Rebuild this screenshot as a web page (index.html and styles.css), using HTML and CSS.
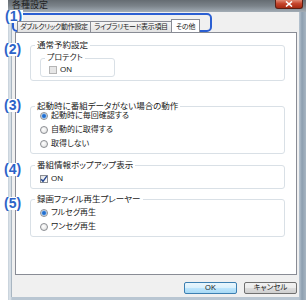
FILE: index.html
```html
<!DOCTYPE html>
<html lang="ja">
<head>
    <meta charset="UTF-8">
    <title>各種設定</title>
    <link rel="stylesheet" href="styles.css">
</head>
<body>
    <div class="window">
        <div class="titlebar">
            <span class="title">各種設定</span>
            <span class="close">
                <svg width="8" height="6" viewBox="0 0 8 6"><path d="M1 0.5 L7 5.5 M7 0.5 L1 5.5" stroke="#fff" stroke-width="1.6"/></svg>
            </span>
        </div>
        <div class="frame">
            <div class="client">
                <div class="tabs">
                    <div class="tab tab-wide">ダブルクリック動作設定</div>
                    <div class="tab tab-lib">ライブラリモード表示項目</div>
                    <div class="tab active">その他</div>
                </div>

                <div class="page">
                    <fieldset class="group g1">
                        <legend>通常予約設定</legend>
                        <fieldset class="group inner">
                            <legend>プロテクト</legend>
                            <div class="row"><span class="check disabled"></span>ON</div>
                        </fieldset>
                    </fieldset>

                    <fieldset class="group g2">
                        <legend>起動時に番組データがない場合の動作</legend>
                        <div class="row"><span class="radio on"></span>起動時に毎回確認する</div>
                        <div class="row"><span class="radio"></span>自動的に取得する</div>
                        <div class="row"><span class="radio"></span>取得しない</div>
                    </fieldset>

                    <fieldset class="group g3">
                        <legend>番組情報ポップアップ表示</legend>
                        <div class="row">
                            <span class="check">
                                <svg width="8" height="8" viewBox="0 0 8 8"><path d="M1.2 4.2 L3 6.3 L6.8 1.2" fill="none" stroke="#24468f" stroke-width="1.4"/></svg>
                            </span>ON
                        </div>
                    </fieldset>

                    <fieldset class="group g4">
                        <legend>録画ファイル再生プレーヤー</legend>
                        <div class="row"><span class="radio on"></span>フルセグ再生</div>
                        <div class="row"><span class="radio"></span>ワンセグ再生</div>
                    </fieldset>
                </div>

                <div class="buttons">
                    <button class="btn default">OK</button>
                    <button class="btn">キャンセル</button>
                </div>
            </div>
        </div>
    </div>

    <!-- 注記（青い番号と枠） -->
    <div class="tab-mark"></div>
    <span class="mark m1">(1)</span>
    <span class="mark m2">(2)</span>
    <span class="mark m3">(3)</span>
    <span class="mark m4">(4)</span>
    <span class="mark m5">(5)</span>
</body>
</html>
```

FILE: styles.css
```css
body {
    margin: 0;
    background-color: #ffffff;
    font-family: "Liberation Sans", "Noto Sans CJK JP", sans-serif;
    font-feature-settings: "palt";
    color: #1a1a1a;
    position: relative;
    width: 306px;
    height: 300px;
    overflow: hidden;
}

.window {
    margin-left: 8px;
    width: 298px;
    height: 300px;
    display: flex;
    flex-direction: column;
    background: linear-gradient(90deg, #c3ced8 0, #dfe6ec 2px, #b9c6d2 4px, #b9c6d2 291px, #8d9fb0 294px, #a7b5c2 298px);
}

.titlebar {
    height: 12px;
    display: flex;
    justify-content: space-between;
    align-items: flex-start;
    background: linear-gradient(180deg, #656c72 0, #7b838a 6px, #a3adb6 12px);
}

.title {
    font-size: 9px;
    line-height: 9px;
    margin: 1px 0 0 4px;
    color: #1e1e1e;
}

.close {
    width: 28px;
    height: 9px;
    margin-right: 3px;
    display: flex;
    align-items: center;
    justify-content: center;
    border: 1px solid #5b1f14;
    border-top: none;
    border-radius: 0 0 3px 3px;
    box-sizing: border-box;
    background: linear-gradient(180deg, #e08a74 0, #c5452c 45%, #a62a12 100%);
}

.frame {
    flex: 1;
    padding: 0 7px 3px 4px;
    display: flex;
}

.client {
    flex: 1;
    background-color: #f0f0f0;
    padding: 9px 2px 0 3px;
    display: flex;
    flex-direction: column;
    border-left: 1px solid #a9b6c2;
    margin-left: -1px;
}

.tabs {
    display: flex;
    height: 11px;
    padding-left: 2px;
    position: relative;
    z-index: 1;
}

.tab {
    height: 11px;
    box-sizing: border-box;
    border: 1px solid #898c95;
    border-bottom: none;
    background: linear-gradient(180deg, #f6f6f6, #e2e2e2);
    font-size: 7px;
    letter-spacing: -0.3px;
    line-height: 10px;
    text-align: center;
    margin-right: -1px;
    white-space: nowrap;
    overflow: hidden;
}

.tab-wide {
    width: 74px;
}

.tab-lib {
    width: 82px;
}

.tab.active {
    width: 29px;
    height: 13px;
    margin-top: -2px;
    background: #ffffff;
    line-height: 13px;
}

.page {
    height: 243px;
    box-sizing: border-box;
    border: 1px solid #898c95;
    background-color: #ffffff;
    padding: 0 11px 0 14px;
}

.group {
    margin: 0;
    padding: 0 0 3px 0;
    border: 1px solid #d9e0e6;
    border-radius: 3px;
    min-width: 0;
}

.group legend {
    margin-left: 4px;
    padding: 0 2px;
    font-size: 8.5px;
    line-height: 10px;
}

.row {
    display: flex;
    align-items: center;
    gap: 3px;
    font-size: 8px;
    line-height: 10px;
    padding-left: 9px;
    margin-top: 4px;
}

.g1 {
    margin-top: 7px;
    padding-bottom: 3px;
}

.inner {
    width: 75px;
    box-sizing: border-box;
    margin: 3px 0 0 9px;
    padding-bottom: 1px;
}

.inner legend {
    font-size: 8px;
}

.inner .row {
    margin-top: 2px;
    padding-left: 8px;
}

.g2 {
    margin-top: 20px;
    padding-bottom: 4px;
}

.g2 .row:first-of-type {
    margin-top: 0;
}

.g3 {
    margin-top: 6px;
    padding-bottom: 4px;
}

.g4 {
    margin-top: 5px;
    padding-bottom: 4px;
}

.radio {
    width: 8px;
    height: 8px;
    box-sizing: border-box;
    border-radius: 50%;
    border: 1px solid #8b8e93;
    background: radial-gradient(circle at 40% 40%, #ffffff 0, #e9e9e9 60%, #cfcfcf 100%);
}

.radio.on {
    background: radial-gradient(circle, #1c5fbf 0, #2d7bd8 1.5px, #a9c9ef 2.5px, #ececec 3px);
}

.check {
    width: 8px;
    height: 8px;
    box-sizing: border-box;
    border: 1px solid #8b8e93;
    background: linear-gradient(135deg, #e3e3e3, #ffffff);
    display: flex;
    align-items: center;
    justify-content: center;
}

.check svg {
    margin: -1px;
}

.check.disabled {
    border-color: #b5b5b5;
    background: #e6e6e6;
}

.buttons {
    display: flex;
    justify-content: flex-end;
    gap: 7px;
    padding-top: 7px;
}

.btn {
    width: 53px;
    height: 12px;
    padding: 0;
    border: 1px solid #707070;
    border-radius: 2px;
    background: linear-gradient(180deg, #f2f2f2 0, #ebebeb 50%, #dddddd 51%, #cfcfcf 100%);
    font-family: "Liberation Sans", "Noto Sans CJK JP", sans-serif;
    font-feature-settings: "palt";
    font-size: 7.5px;
    line-height: 10px;
    color: #1a1a1a;
}

.btn.default {
    border-color: #3c7fb1;
    background: linear-gradient(180deg, #eaf6fd 0, #d9f0fc 50%, #bee6fd 51%, #a7d9f5 100%);
}

/* 注記 */
.tab-mark {
    position: absolute;
    left: 12px;
    top: 13px;
    width: 200px;
    height: 19px;
    box-sizing: border-box;
    border: 2px solid #2b5fd2;
    border-radius: 5px;
}

.mark {
    position: absolute;
    left: 3px;
    font-family: "Liberation Sans", sans-serif;
    font-weight: bold;
    font-size: 14px;
    line-height: 13px;
    color: #2d63c8;
    background-color: #ffffff;
    padding: 0 1px;
}

.m1 {
    left: 4px;
    top: 10px;
}

.m2 {
    top: 43px;
}

.m3 {
    top: 99px;
}

.m4 {
    top: 163px;
}

.m5 {
    top: 197px;
}
```
